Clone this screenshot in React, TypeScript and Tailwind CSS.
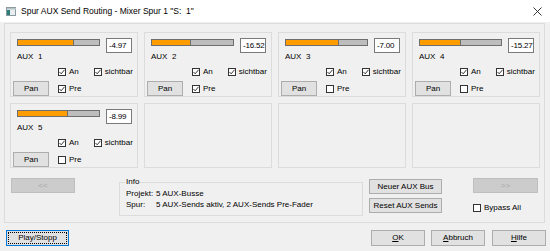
import React from "react";

const sends = [
  { name: "AUX  1", value: "-4.97", fill: 57, pre: true },
  { name: "AUX  2", value: "-16.52", fill: 40, pre: true },
  { name: "AUX  3", value: "-7.00", fill: 54, pre: false },
  { name: "AUX  4", value: "-15.27", fill: 42, pre: false },
  { name: "AUX  5", value: "-8.99", fill: 51, pre: false },
];

const CheckBox = ({ checked, label }: { checked: boolean; label: string }) => (
  <div className="flex items-center h-[10px]">
    <div className="w-[8px] h-[8px] border border-[#333] bg-white flex items-center justify-center">
      {checked && (
        <svg width="6" height="6" viewBox="0 0 6 6">
          <path d="M0.5 3 L2.2 4.8 L5.5 0.8" fill="none" stroke="#222" strokeWidth="0.9" />
        </svg>
      )}
    </div>
    <span className="ml-[3px]">{label}</span>
  </div>
);

const Button = ({
  children,
  w,
  disabled,
}: {
  children: React.ReactNode;
  w: string;
  disabled?: boolean;
}) => (
  <div
    className={`${w} h-[15px] border flex items-center justify-center ${
      disabled
        ? "bg-[#cccccc] border-[#bfbfbf] text-[#a8a8a8]"
        : "bg-[#e1e1e1] border-[#adadad] text-black"
    }`}
  >
    {children}
  </div>
);

const SendCard = ({ send }: { send: (typeof sends)[number] }) => (
  <div className="w-[128px] h-[65px] border border-[#dcdcdc] pl-[2px] pt-[5px] flex flex-col">
    <div className="flex ml-[4px]">
      <div className="flex flex-col">
        <div className="mt-[1px] w-[83px] h-[7px] border border-[#6e6e6e] bg-[#bdbdbd] flex">
          <div className="h-full bg-[#ff9c00] border-r border-[#6e6e6e]" style={{ width: send.fill - 1 }} />
        </div>
        <div className="mt-[6px] leading-[10px] whitespace-pre">{send.name}</div>
      </div>
      <div className="ml-[6px] w-[26px] h-[15px] border border-[#7a7a7a] bg-white pl-[2px] flex items-center tracking-[-0.2px]">
        {send.value}
      </div>
    </div>
    <div className="flex mt-[5px] ml-[45px]">
      <CheckBox checked label="An" />
      <div className="ml-[15px]">
        <CheckBox checked label="sichtbar" />
      </div>
    </div>
    <div className="flex items-center mt-[4px]">
      <Button w="w-[36px]">Pan</Button>
      <div className="ml-[9px]">
        <CheckBox checked={send.pre} label="Pre" />
      </div>
    </div>
  </div>
);

const EmptyCard = () => <div className="w-[128px] h-[65px] border border-[#dcdcdc]" />;

export default function App() {
  return (
    <div
      className="w-[550px] h-[251px] bg-[#f0f0f0] text-[8px] leading-[10px] text-black overflow-hidden flex flex-col"
      style={{ fontFamily: '"Liberation Sans", Arial, sans-serif' }}
    >
      <div className="h-[22px] bg-white flex items-center pl-[6px] pr-[8px] shrink-0">
        <svg width="10" height="9" viewBox="0 0 10 9">
          <rect x="0.5" y="0.5" width="9" height="8" fill="#e8eef0" stroke="#8a9aa0" />
          <rect x="1" y="1" width="9" height="1.5" fill="#b8c4c8" />
          <rect x="1" y="3" width="3" height="5" fill="#2f7d7a" />
        </svg>
        <span className="ml-[5px] text-[8.5px] whitespace-pre">Spur AUX Send Routing - Mixer Spur 1 "S:  1"</span>
        <svg className="ml-auto" width="9" height="9" viewBox="0 0 9 9">
          <path d="M0.5 0.5 L8.5 8.5 M8.5 0.5 L0.5 8.5" stroke="#222" strokeWidth="0.9" />
        </svg>
      </div>

      <div className="px-[4px] pt-[1px] flex flex-col">
        <div className="w-[541px] h-[200px] border border-[#dcdcdc] pt-[8px] px-[5px] flex flex-col">
          <div className="grid grid-cols-[repeat(4,128px)] gap-x-[6px] gap-y-[6px]">
            {sends.map((s) => (
              <SendCard key={s.name} send={s} />
            ))}
            <EmptyCard />
            <EmptyCard />
            <EmptyCard />
          </div>

          <div className="flex items-start mt-[10px]">
            <div className="ml-[1px]">
              <Button w="w-[64px]" disabled>
                {"<<"}
              </Button>
            </div>
            <fieldset className="ml-[44px] w-[244px] h-[39px] border border-[#dcdcdc] px-[6px] -mt-[1px]">
              <legend className="px-[1px] ml-[-1px]">Info</legend>
              <div className="grid grid-cols-[30px_1fr] gap-y-[1px] mt-[2px]">
                <span>Projekt:</span>
                <span>5 AUX-Busse</span>
                <span>Spur:</span>
                <span>5 AUX-Sends aktiv, 2 AUX-Sends Pre-Fader</span>
              </div>
            </fieldset>
            <div className="ml-[6px] flex flex-col gap-[4px] mt-[1px]">
              <Button w="w-[73px]">Neuer AUX Bus</Button>
              <Button w="w-[73px]">Reset AUX Sends</Button>
            </div>
            <div className="ml-[31px] flex flex-col">
              <Button w="w-[65px]" disabled>
                {">>"}
              </Button>
              <div className="mt-[10px]">
                <CheckBox checked={false} label="Bypass All" />
              </div>
            </div>
          </div>
        </div>

        <div className="flex mt-[7px]">
          <div className="ml-[2px] w-[63px] h-[16px] border border-[#0078d7] bg-[#e1e1e1] p-[1px]">
            <div className="w-full h-full border border-dotted border-black flex items-center justify-center">
              Play/Stopp
            </div>
          </div>
          <div className="ml-auto flex gap-[6px]">
            <div className="h-[16px] flex">
              <Button w="w-[54px] !h-[16px]">
                <u>O</u>K
              </Button>
            </div>
            <Button w="w-[54px] !h-[16px]">
              <u>A</u>bbruch
            </Button>
            <div className="ml-[1px]">
              <Button w="w-[54px] !h-[16px]">
                <u>H</u>ilfe
              </Button>
            </div>
          </div>
        </div>
      </div>
    </div>
  );
}
